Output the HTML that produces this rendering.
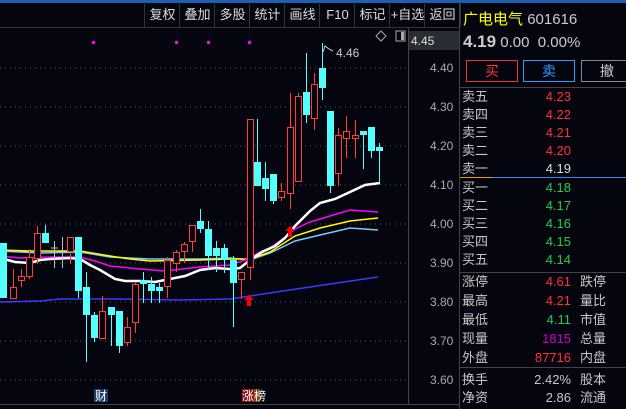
<!DOCTYPE html><html><head><meta charset="utf-8"><style>
body{margin:0;width:626px;height:409px;background:#05050f;overflow:hidden;position:relative;font-family:"Liberation Sans","Noto Sans CJK SC",sans-serif;color:#c8c8c8}
.a{position:absolute;white-space:nowrap}
.tb{position:absolute;top:2px;height:25px;border-left:1px solid #333;font-size:13px;line-height:25px;text-align:center;color:#ddd}
.r{position:absolute;left:462px;font-size:13px;width:160px;height:18px;line-height:18px}
.r .v{position:absolute;right:51px}
.r .k{position:absolute;left:118px}
</style></head><body>
<div class="a" style="left:0;top:0;width:626px;height:3px;background:#1e5fb4"></div>
<div class="a" style="left:0;top:27px;width:460px;height:1px;background:#333"></div>
<div class="tb" style="left:144px;width:35px">复权</div>
<div class="tb" style="left:179px;width:35px">叠加</div>
<div class="tb" style="left:214px;width:35px">多股</div>
<div class="tb" style="left:249px;width:35px">统计</div>
<div class="tb" style="left:284px;width:35px">画线</div>
<div class="tb" style="left:319px;width:35px">F10</div>
<div class="tb" style="left:354px;width:35px">标记</div>
<div class="tb" style="left:389px;width:35px">+自选</div>
<div class="tb" style="left:424px;width:35px;border-right:1px solid #333">返回</div>
<svg class="a" style="left:0;top:0" width="460" height="409">
<g stroke="#555" stroke-dasharray="1,4">
<line x1="0" y1="68" x2="408" y2="68"/><line x1="0" y1="107" x2="408" y2="107"/><line x1="0" y1="146" x2="408" y2="146"/><line x1="0" y1="185" x2="408" y2="185"/><line x1="0" y1="224" x2="408" y2="224"/><line x1="0" y1="263" x2="408" y2="263"/><line x1="0" y1="302" x2="408" y2="302"/><line x1="0" y1="341" x2="408" y2="341"/><line x1="0" y1="380" x2="408" y2="380"/>
</g>
<line x1="408.5" y1="28" x2="408.5" y2="404" stroke="#444"/>
<line x1="0" y1="404.5" x2="460" y2="404.5" stroke="#444"/>
<rect x="409" y="31" width="51" height="19" fill="#2a2c33"/>
<g fill="#f0f" ><rect x="92" y="41" width="3" height="3"/><rect x="175" y="41" width="3" height="3"/><rect x="207" y="41" width="3" height="3"/><rect x="248" y="41" width="3" height="3"/></g>
<path d="M381 31l5 5-5 5-5-5z" fill="none" stroke="#aaa"/>
<rect x="396" y="31" width="9" height="10" fill="none" stroke="#aaa"/><rect x="401" y="32" width="3" height="8" fill="#aaa"/>
<path d="M323 52l2-6 4 3 4 2" fill="none" stroke="#ccc"/>
<g stroke-width="1.5" fill="none">
<polyline stroke="#3a3aff" points="0,302 40,301 60,299 120,299 180,300 230,299 250,296 290,290 330,284 378,277"/>
<polyline stroke="#7ac8ff" points="0,251 40,253 80,252 110,257 150,259 200,259 230,258 250,260 270,253 295,241 320,235 350,228 378,230"/>
<polyline stroke="#ff0" points="0,250 30,251 80,251 110,256 130,259 150,261 200,260 230,259 250,259 270,252 295,236 320,228 350,221 378,218"/>
<polyline stroke="#f0f" points="0,256 20,258 50,257 80,257 95,261 110,266 140,269 165,271 200,267 230,265 245,260 260,252 270,248 280,241 295,229 310,222 330,216 350,210 378,212"/>
<polyline stroke="#fff" stroke-width="2.5" points="0,258 15,262 30,263 40,260 50,259 70,258 80,259 90,265 100,270 115,279 125,281 140,281 155,282 170,279 185,276 200,270 215,268 230,269 240,268 250,260 262,252 275,246 285,238 295,226 310,211 320,203 335,199 350,192 365,185 380,183"/>
</g>
<g id="c"></g>
<g fill="#f00"><path d="M249 295l-5 5h3v6h4v-6h3z"/><path d="M290 226l-5 5h3v6h4v-6h3z"/></g>
<rect x="94" y="389" width="14" height="13" fill="#1a3d6b"/><rect x="242" y="389" width="12" height="13" fill="#8a1010"/><rect x="254" y="389" width="6" height="13" fill="#7a4a10"/>
<text x="95" y="400" font-size="12" fill="#fff" font-family="Noto Sans CJK SC">财</text>
<text x="242" y="400" font-size="12" fill="#fff" font-family="Noto Sans CJK SC">涨榜</text>
<g font-size="12" fill="#aaa" font-family="Liberation Sans"><text x="336" y="57" fill="#ccc">4.46</text><text x="411" y="45" fill="#ddd">4.45</text>
<text x="430" y="72">4.40</text><text x="430" y="111">4.30</text><text x="430" y="150">4.20</text><text x="430" y="189">4.10</text><text x="430" y="228">4.00</text><text x="430" y="267">3.90</text><text x="430" y="306">3.80</text><text x="430" y="345">3.70</text><text x="430" y="384">3.60</text></g>
</svg>
<script>
var C=[
["c",0,243,298,243,298],["r",10,287,299,269,299],["r",18,276,281,269,287],["r",26,257,277,249,279],["r",34,233,259,226,264],["c",42,233,243,225,243],["g",51,248,248,241,268],["g",59,252,252,237,268],["r",67,237,252,237,264],["c",75,237,291,237,298],["c",83,287,315,272,362],["c",91,315,338,312,342],["r",99,311,339,296,339],["c",108,307,315,307,346],["c",116,311,346,311,353],["r",124,327,343,317,346],["r",132,284,323,282,333],["c",140,280,284,272,303],["c",148,284,291,277,303],["c",156,287,291,283,303],["r",164,260,287,257,298],["r",173,252,264,250,272],["r",181,244,252,242,263],["r",189,225,242,225,252],["c",197,221,229,209,233],["c",205,229,256,221,270],["c",213,248,256,241,272],["c",221,248,260,244,273],["c",230,260,283,256,327],["r",238,272,280,272,299],["r",247,119,268,119,280],["c",254,162,186,119,186],["c",262,178,189,162,201],["c",270,174,201,174,204],["r",278,191,198,183,201],["r",287,127,194,93,209],["r",295,96,182,93,182],["c",303,92,115,53,123],["r",311,84,119,73,130],["c",319,68,88,43,100],["c",327,111,186,111,193],["r",335,135,174,128,186],["r",343,131,139,116,158],["r",352,135,139,120,158],["c",360,131,135,131,169],["c",368,127,151,127,158],["c",376,147,151,143,183]];
var s="",col={r:"#ff3b3b",c:"#54ffff",g:"#bbb"};
C.forEach(function(d){var k=col[d[0]],x=d[1],w=7,m=x+3.5;
s+='<line x1="'+m+'" y1="'+d[4]+'" x2="'+m+'" y2="'+d[5]+'" stroke="'+k+'"/>';
var h=Math.max(1,d[3]-d[2]);
if(d[0]=="c")s+='<rect x="'+x+'" y="'+d[2]+'" width="'+w+'" height="'+h+'" fill="'+k+'"/>';
else if(d[0]=="g")s+='<line x1="'+(x)+'" y1="'+d[2]+'" x2="'+(x+w)+'" y2="'+d[2]+'" stroke="'+k+'"/>';
else s+='<rect x="'+(x+.5)+'" y="'+(d[2]+.5)+'" width="'+(w-1)+'" height="'+(h-1)+'" fill="#05050f" stroke="'+k+'"/>';});
document.getElementById("c").innerHTML=s;
</script>
<div class="a" style="left:459px;top:3px;width:1px;height:406px;background:#444"></div>
<div class="a" style="left:463px;top:8px;font-size:15px"><span style="color:#ff0">广电电气</span> <span style="color:#ccc">601616</span></div>
<div class="a" style="left:463px;top:32px;font-size:15px;color:#ccc"><b style="font-size:17px">4.19</b> 0.00 &nbsp;0.00%</div>
<div class="a" style="left:466px;top:60px;width:50px;height:20px;border:1px solid #e33;color:#f33;text-align:center;font-size:14px;line-height:20px">买</div>
<div class="a" style="left:523px;top:60px;width:50px;height:20px;border:1px solid #39f;color:#39f;text-align:center;font-size:14px;line-height:20px">卖</div>
<div class="a" style="left:581px;top:60px;width:50px;height:20px;border:1px solid #888;color:#ccc;text-align:center;font-size:14px;line-height:20px">撤</div>
<div class="a" style="left:460px;top:87px;width:166px;height:1px;background:#444"></div>
<div class="a" style="left:460px;top:177px;width:33px;height:1px;background:#e90"></div>
<div class="a" style="left:493px;top:177px;width:133px;height:1px;background:#38f"></div>
<div class="a" style="left:460px;top:272px;width:166px;height:1px;background:#444"></div>
<div class="a" style="left:460px;top:367px;width:166px;height:1px;background:#444"></div>
<div class="r" style="top:88px">卖五<span class="v" style="color:#f33">4.23</span></div>
<div class="r" style="top:106px">卖四<span class="v" style="color:#f33">4.22</span></div>
<div class="r" style="top:124px">卖三<span class="v" style="color:#f33">4.21</span></div>
<div class="r" style="top:142px">卖二<span class="v" style="color:#f33">4.20</span></div>
<div class="r" style="top:160px">卖一<span class="v" style="color:#ddd">4.19</span></div>
<div class="r" style="top:179px">买一<span class="v" style="color:#2c4">4.18</span></div>
<div class="r" style="top:197px">买二<span class="v" style="color:#2c4">4.17</span></div>
<div class="r" style="top:215px">买三<span class="v" style="color:#2c4">4.16</span></div>
<div class="r" style="top:233px">买四<span class="v" style="color:#2c4">4.15</span></div>
<div class="r" style="top:251px">买五<span class="v" style="color:#2c4">4.14</span></div>
<div class="r" style="top:273px">涨停<span class="v" style="color:#f33">4.61</span><span class="k">跌停</span></div>
<div class="r" style="top:292px">最高<span class="v" style="color:#f33">4.21</span><span class="k">量比</span></div>
<div class="r" style="top:311px">最低<span class="v" style="color:#2c4">4.11</span><span class="k">市值</span></div>
<div class="r" style="top:330px">现量<span class="v" style="color:#c0c">1815</span><span class="k">总量</span></div>
<div class="r" style="top:349px">外盘<span class="v" style="color:#f33">87716</span><span class="k">内盘</span></div>
<div class="r" style="top:371px">换手<span class="v">2.42%</span><span class="k">股本</span></div>
<div class="r" style="top:389px">净资<span class="v">2.86</span><span class="k">流通</span></div>
</body></html>
